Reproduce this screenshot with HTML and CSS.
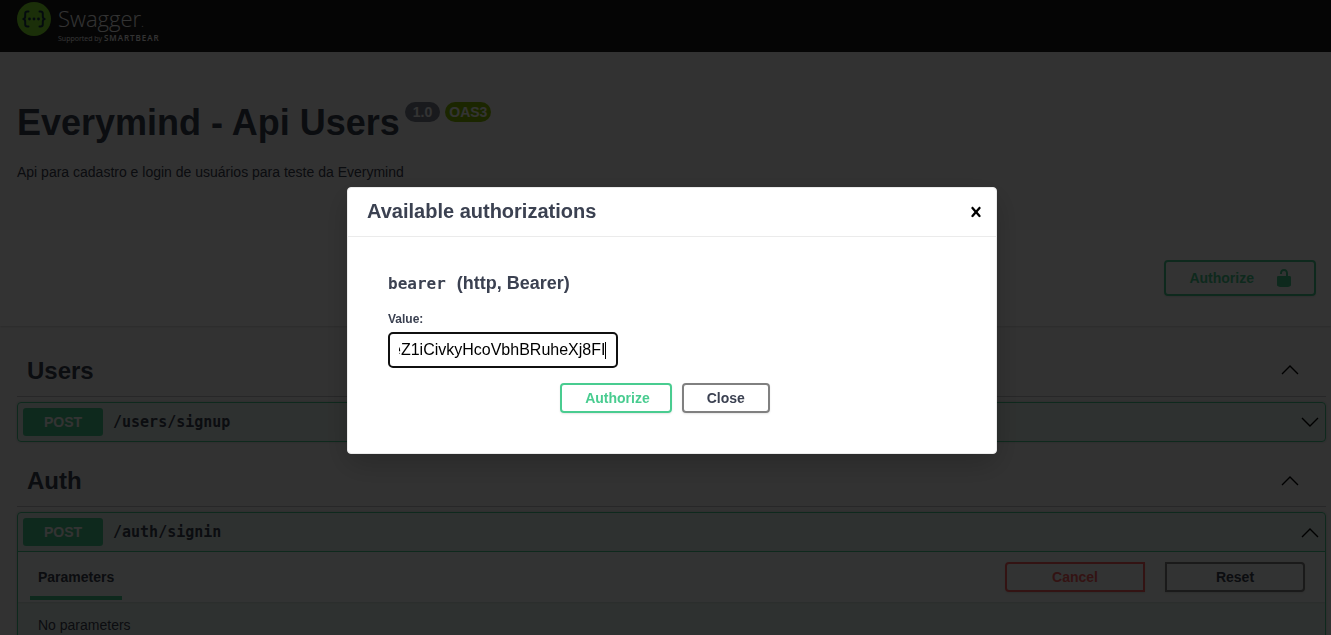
FILE: index.html
```html
<!DOCTYPE html>
<html lang="pt-BR">
<head>
<meta charset="utf-8">
<meta name="viewport" content="width=device-width, initial-scale=1">
<title>Swagger UI</title>
<link rel="stylesheet" href="styles.css">
</head>
<body>
<header class="topbar">
  <a class="logo" href="#">
    <svg class="logo-mark" viewBox="0 0 34 34" aria-hidden="true">
      <circle cx="17" cy="17" r="17" fill="#85ea2d"/>
      <g fill="none" stroke="#173647" stroke-width="2" stroke-linecap="round" stroke-linejoin="round">
        <path d="M11.500 9.500h-1c-1.700 0-2.300.8-2.300 2.300v2.500c0 1.600-.5 2.400-1.900 2.700 1.400.3 1.900 1.100 1.900 2.700v2.500c0 1.500.6 2.300 2.300 2.300h1"/>
        <path d="M22.500 9.500h1c1.700 0 2.300.8 2.300 2.300v2.500c0 1.600.5 2.400 1.900 2.700-1.400.3-1.900 1.100-1.900 2.700v2.500c0 1.500-.6 2.300-2.300 2.300h-1"/>
      </g>
      <g fill="#173647"><circle cx="12.500" cy="17" r="1.400"/><circle cx="17" cy="17" r="1.400"/><circle cx="21.500" cy="17" r="1.400"/></g>
    </svg>
    <span class="logo-text">
      <span class="logo-name">Swagger<span class="logo-dot">.</span></span>
      <span class="logo-by">Supported by <b>SMARTBEAR</b></span>
    </span>
  </a>
</header>

<main>
  <section class="info">
    <h1>Everymind - Api Users</h1>
    <span class="badge version">1.0</span>
    <span class="badge oas">OAS3</span>
    <p>Api para cadastro e login de usuários para teste da Everymind</p>
  </section>

  <section class="scheme">
    <button class="btn authorize wide" type="button">Authorize
      <svg width="20" height="20" viewBox="0 0 20 20" aria-hidden="true"><path fill="currentColor" d="M15.800 8H14V5.600C14 2.700 12.665 1 10 1 7.334 1 6 2.700 6 5.600V6h2v-.800C8 3.754 8.797 3 10 3c1.203 0 2 .754 2 2.200V8H4c-.553 0-1 .646-1 1.199V17c0 .549.428 1.139.951 1.307l1.197.387C5.672 18.861 6.550 19 7.100 19h5.800c.549 0 1.428-.139 1.951-.307l1.196-.387c.524-.167.953-.757.953-1.306V9.199C17 8.646 16.352 8 15.800 8z"/></svg>
    </button>
  </section>

  <div class="operations">
    <section class="tag">
      <h2>Users
        <button class="toggle" type="button" aria-label="Collapse Users"><svg viewBox="0 0 20 20"><path d="M2 13l8-8 8 8"/></svg></button>
      </h2>
      <article class="op">
        <div class="summary">
          <span class="method">POST</span><span class="path">/users/signup</span>
          <button class="toggle" type="button" aria-label="Expand /users/signup"><svg viewBox="0 0 20 20"><path d="M2 6l8 8 8-8"/></svg></button>
        </div>
      </article>
    </section>

    <section class="tag">
      <h2>Auth
        <button class="toggle" type="button" aria-label="Collapse Auth"><svg viewBox="0 0 20 20"><path d="M2 14l8-8 8 8"/></svg></button>
      </h2>
      <article class="op open">
        <div class="summary">
          <span class="method">POST</span><span class="path">/auth/signin</span>
          <button class="toggle" type="button" aria-label="Collapse /auth/signin"><svg viewBox="0 0 20 20"><path d="M2 15l8-8 8 8"/></svg></button>
        </div>
        <div class="op-head">
          <h3>Parameters</h3>
          <button class="btn cancel" type="button">Cancel</button>
          <button class="btn reset" type="button">Reset</button>
        </div>
        <p class="empty">No parameters</p>
      </article>
    </section>
  </div>
</main>

<div class="overlay">
  <div class="modal" role="dialog" aria-modal="true" aria-labelledby="dialog-title">
    <div class="modal-head">
      <h2 id="dialog-title">Available authorizations</h2>
      <button class="dismiss" type="button" aria-label="Dismiss">
        <svg viewBox="0 0 20 20"><path d="M14.348 14.849c-.469.469-1.229.469-1.697 0L10 11.819l-2.651 3.029c-.469.469-1.229.469-1.697 0-.469-.469-.469-1.229 0-1.697l2.758-3.150-2.759-3.152c-.469-.469-.469-1.228 0-1.697.469-.469 1.228-.469 1.697 0L10 8.183l2.651-3.031c.469-.469 1.228-.469 1.697 0 .469.469.469 1.229 0 1.697l-2.758 3.152 2.758 3.150c.469.469.469 1.229 0 1.698z"/></svg>
      </button>
    </div>
    <form class="modal-body">
      <h3><code>bearer</code> (http, Bearer)</h3>
      <label for="token">Value:</label>
      <div class="field">
        <input id="token" type="text" value="eZ1iCivkyHcoVbhBRuheXj8FI" autocomplete="off" spellcheck="false">
      </div>
      <div class="actions">
        <button class="btn authorize" type="button">Authorize</button>
        <button class="btn close" type="button">Close</button>
      </div>
    </form>
  </div>
</div>
<script src="app.js"></script>
</body>
</html>
```

FILE: app.js
```js
const token = document.getElementById("token");
token.focus();
token.setSelectionRange(token.value.length, token.value.length);
token.scrollLeft = token.scrollWidth;
```

FILE: styles.css
```css
* { box-sizing: border-box; }

body {
  height: 100vh;
  margin: 0;
  overflow: hidden;
  background: #fafafa;
  color: #3b4151;
  font: 14px/20px "Liberation Sans", Arial, sans-serif;
}

h1, h2, h3, p { margin: 0; }
button, input { font-family: inherit; }

.topbar {
  height: 52px;
  padding: 2px 17px;
  background: #1b1b1b;
}
.logo {
  display: inline-flex;
  gap: 7px;
  color: #fff;
  text-decoration: none;
}
.logo-mark { width: 34px; height: 34px; }
.logo-text {
  display: flex;
  flex-direction: column;
  padding-top: 4px;
  font-family: "Open Sans", sans-serif;
}
.logo-name { font-size: 22px; font-weight: 300; line-height: 24px; }
.logo-dot { font-size: 12px; }
.logo-by { font-size: 7px; line-height: 6px; }
.logo-by b { font-size: 8px; font-weight: 600; letter-spacing: 1px; }

.info {
  display: flex;
  flex-wrap: wrap;
  align-items: flex-start;
  gap: 0 5px;
  padding: 50px 17px 48px;
}
.info h1 { font-size: 36px; line-height: 42px; }
.info p { flex-basis: 100%; margin-top: 18px; }
.badge {
  border-radius: 10px;
  color: #fff;
  font-weight: bold;
}
.version { padding: 0 8px; background: #7d8492; }
.oas { padding: 0 4px; background: #89bf04; }

.scheme {
  display: flex;
  justify-content: flex-end;
  padding: 30px 15px;
  background: #fff;
  box-shadow: 0 1px 2px rgba(0, 0, 0, .15);
}

.btn {
  padding: 3px 23px;
  border: 2px solid gray;
  border-radius: 4px;
  background: transparent;
  box-shadow: 0 1px 2px rgba(0, 0, 0, .1);
  color: #3b4151;
  font-size: 14px;
  font-weight: bold;
  line-height: 20px;
}
.btn.authorize {
  padding-right: 20px;
  border-color: #49cc90;
  color: #49cc90;
}
.wide {
  display: flex;
  align-items: center;
  gap: 20px;
  padding-block: 6px;
}

.operations { padding: 21px 5px 0 17px; }
.tag h2 {
  display: flex;
  align-items: center;
  justify-content: space-between;
  height: 50px;
  margin-bottom: 5px;
  padding: 0 26px 2px 10px;
  border-bottom: 1px solid rgba(59, 65, 81, .3);
  font-size: 24px;
  line-height: 30px;
}
.toggle {
  display: flex;
  padding: 0;
  border: 0;
  background: none;
}
.toggle svg { width: 20px; height: 20px; fill: none; stroke: #000; stroke-width: 1.400; }

.op {
  margin-bottom: 15px;
  border: 1px solid #49cc90;
  border-radius: 4px;
  background: rgba(73, 204, 144, .1);
  box-shadow: 0 0 3px rgba(0, 0, 0, .19);
}
.summary {
  display: flex;
  align-items: center;
  gap: 10px;
  padding: 5px;
}
.open .summary { border-bottom: 1px solid #49cc90; }
.method {
  width: 80px;
  padding: 4px 0;
  border-radius: 3px;
  background: #49cc90;
  color: #fff;
  font-weight: bold;
  text-align: center;
}
.path {
  flex: 1;
  font: bold 15px/20px "DejaVu Sans Mono", monospace;
}

.op-head {
  display: flex;
  align-items: center;
  height: 50px;
  padding: 0 20px 0 12px;
  background: rgba(255, 255, 255, .8);
  box-shadow: 0 1px 2px rgba(0, 0, 0, .1);
}
.op-head h3 {
  align-self: flex-end;
  margin: 0 auto 2px 0;
  padding: 0 8px 9px;
  border-bottom: 4px solid #49cc90;
  font-size: 14px;
}
.cancel, .reset { width: 140px; }
.cancel {
  margin-right: 20px;
  border-color: #ff6060;
  border-radius: 4px 0 0 4px;
  color: #ff6060;
}
.reset { border-radius: 0 4px 4px 0; }
.empty { padding: 13px 20px 40px; }

.overlay {
  position: fixed;
  inset: 0;
  display: grid;
  place-items: center;
  padding: 6px 0 0 13px;
  background: rgba(0, 0, 0, .8);
}
.modal {
  width: 100%;
  max-width: 650px;
  border: 1px solid #ebebeb;
  border-radius: 4px;
  background: #fff;
  box-shadow: 0 10px 30px rgba(0, 0, 0, .2);
}
.modal-head {
  display: flex;
  align-items: center;
  justify-content: space-between;
  padding: 12px 10px 13px 19px;
  border-bottom: 1px solid #ebebeb;
}
.modal-head h2 { font-size: 20px; line-height: 23px; }
.dismiss {
  padding: 0;
  border: 0;
  background: none;
  line-height: 0;
}
.dismiss svg { width: 20px; height: 20px; fill: #000; }

.modal-body { padding: 36px 40px 40px; }
.modal-body h3 { font-size: 18px; line-height: 20px; }
.modal-body code {
  margin-right: 6px;
  font: bold 16px/20px "DejaVu Sans Mono", monospace;
}
.modal-body label {
  display: block;
  margin-top: 15px;
  font-size: 12px;
  font-weight: bold;
}
.field {
  position: relative;
  width: 230px;
  margin-top: 3px;
}
.field::after {
  content: "";
  position: absolute;
  top: 10px;
  right: 12px;
  width: 1px;
  height: 17px;
  background: #000;
}
.modal-body input {
  display: block;
  width: 100%;
  height: 36px;
  padding: 0 11px 0 9px;
  border: 2px solid #101010;
  border-radius: 5px;
  outline: 0;
  color: #000;
  caret-color: transparent;
  font-size: 16px;
}
.actions {
  display: flex;
  justify-content: center;
  gap: 10px;
  margin-top: 15px;
  padding-right: 14px;
}
```
